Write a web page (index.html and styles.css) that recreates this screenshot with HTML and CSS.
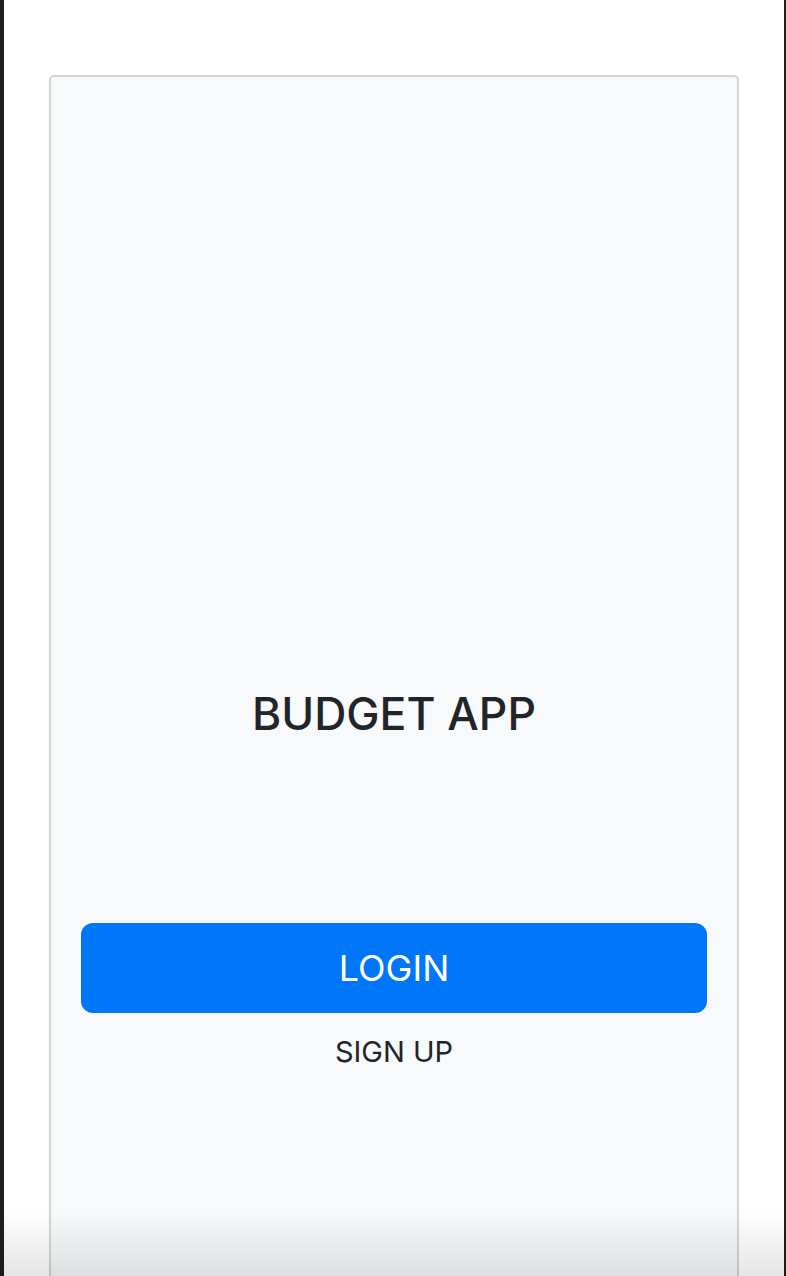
FILE: index.html
```html
<!DOCTYPE html>
<html lang="en">
<head>
<meta charset="utf-8">
<title>Budget App</title>
<link rel="stylesheet" href="styles.css">
</head>
<body>
<div class="frame">
  <main class="card">
    <h1 class="title">BUDGET APP</h1>
    <div class="actions">
      <button class="btn-login" type="button">LOGIN</button>
      <button class="btn-signup" type="button">SIGN UP</button>
    </div>
  </main>
</div>
<div class="fade"></div>
</body>
</html>
```
FILE: styles.css
```css
html, body {
  margin: 0;
  padding: 0;
  height: 100%;
  overflow: hidden;
  background: #ffffff;
  font-family: Inter, "Liberation Sans", sans-serif;
}

.frame {
  box-sizing: border-box;
  height: 100%;
  overflow: hidden;
  border-left: 4px solid #1f1f1f;
  border-right: 2px solid #1f1f1f;
  padding: 75px 45px 0 45px;
}

.card {
  box-sizing: border-box;
  width: 690px;
  min-height: 1300px;
  background: #f8f9fa;
  border: 2px solid #d4d5d7;
  border-bottom: none;
  border-radius: 5px 5px 0 0;
  display: flex;
  flex-direction: column;
  align-items: center;
  padding: 0 30px;
}

.title {
  margin: 611px 0 0 0;
  font-size: 44.5px;
  font-weight: 500;
  color: #212529;
  line-height: 1.2;
  letter-spacing: 0;
}

.actions {
  align-self: stretch;
  display: flex;
  flex-direction: column;
  align-items: center;
  margin-top: 182px;
}

.btn-login {
  width: 100%;
  height: 90px;
  border: none;
  border-radius: 12px;
  background: #0076f9;
  color: #ffffff;
  font-family: inherit;
  font-size: 36px;
  font-weight: 400;
  cursor: pointer;
}

.btn-signup {
  margin-top: 21px;
  border: none;
  background: transparent;
  color: #212529;
  font-family: inherit;
  font-size: 29px;
  font-weight: 400;
  padding: 0;
  cursor: pointer;
}

.fade {
  position: fixed;
  left: 0;
  right: 0;
  bottom: 0;
  height: 66px;
  background: linear-gradient(to bottom, rgba(0,0,0,0), rgba(0,0,0,0.1));
  pointer-events: none;
}
```
